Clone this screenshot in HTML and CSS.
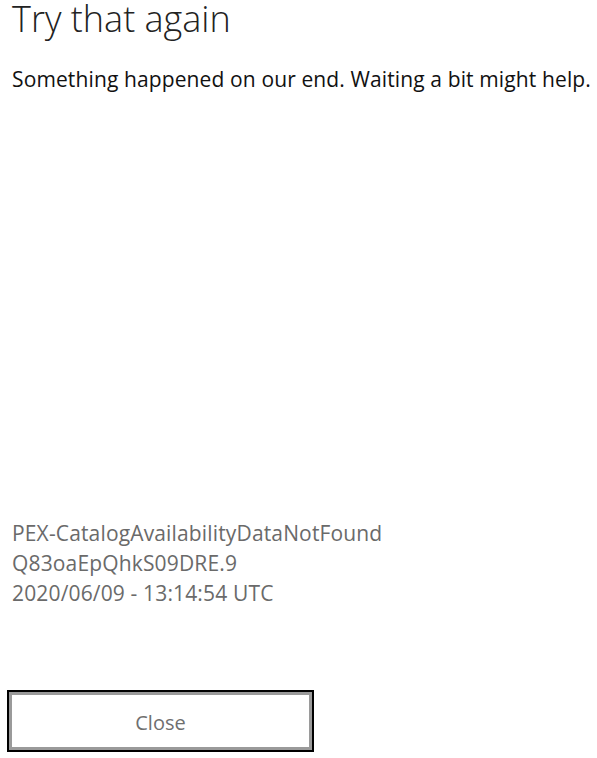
FILE: index.html
```html
<!DOCTYPE html>
<html>
<head>
<meta charset="utf-8">
<link rel="stylesheet" href="styles.css">
</head>
<body>
<div class="page">
  <h1 class="title">Try that again</h1>
  <p class="message">Something happened on our end. Waiting a bit might help.</p>
  <div class="details">
    <div class="line">PEX-CatalogAvailabilityDataNotFound</div>
    <div class="line">Q83oaEpQhkS09DRE.9</div>
    <div class="line">2020/06/09 - 13:14:54 UTC</div>
  </div>
  <button class="close">Close</button>
</div>
</body>
</html>
```
FILE: styles.css
```css
html, body {
  margin: 0;
  padding: 0;
  background: #ffffff;
}
.page {
  width: 597px;
  height: 758px;
  display: flex;
  flex-direction: column;
  align-items: flex-start;
  padding: 0 0 0 12px;
  box-sizing: border-box;
  font-family: "Open Sans", "Noto Sans", sans-serif;
  overflow: hidden;
}
.title {
  margin: 0;
  font-size: 36px;
  font-weight: 300;
  line-height: 38px;
  color: #222;
}
.message {
  margin: 27px 0 0 0;
  font-size: 21px;
  line-height: 28px;
  color: #111;
  white-space: nowrap;
  letter-spacing: 0.12px;
}
.details {
  margin-top: 425px;
  color: #6a6a6a;
  font-size: 21px;
  line-height: 30px;
  letter-spacing: 0.15px;
}
.close {
  margin-top: 82px;
  margin-left: -5px;
  width: 307px;
  height: 62px;
  box-sizing: border-box;
  border: 2px solid #000;
  box-shadow: inset 0 0 0 3px #9a9a9a;
  background: #fff;
  font-family: "Open Sans", "Noto Sans", sans-serif;
  font-size: 20px;
  color: #6f6f6f;
  padding: 2px 0 0 0;
}
```
